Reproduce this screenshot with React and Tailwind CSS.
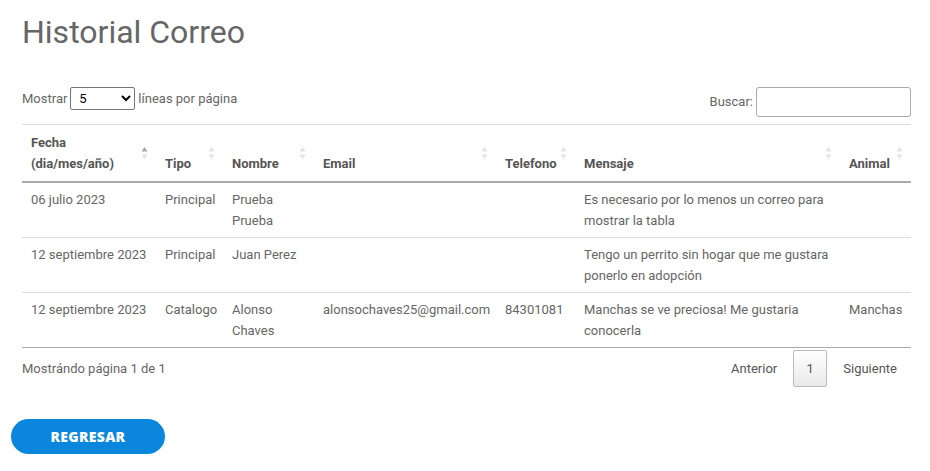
import { useState } from 'react';

const columns = [
  { label: 'Fecha', label2: '(dia/mes/año)', width: 'w-[134px]', active: true },
  { label: 'Tipo', width: 'w-[67px]' },
  { label: 'Nombre', width: 'w-[91px]' },
  { label: 'Email', width: 'w-[182px]' },
  { label: 'Telefono', width: 'w-[79px]' },
  { label: 'Mensaje', width: 'w-[265px]' },
  { label: 'Animal', width: 'w-[71px]' },
];

const rows = [
  {
    fecha: '06 julio 2023',
    tipo: 'Principal',
    nombre: 'Prueba Prueba',
    email: '',
    telefono: '',
    mensaje: 'Es necesario por lo menos un correo para mostrar la tabla',
    animal: '',
  },
  {
    fecha: '12 septiembre 2023',
    tipo: 'Principal',
    nombre: 'Juan Perez',
    email: '',
    telefono: '',
    mensaje: 'Tengo un perrito sin hogar que me gustara ponerlo en adopción',
    animal: '',
  },
  {
    fecha: '12 septiembre 2023',
    tipo: 'Catalogo',
    nombre: 'Alonso Chaves',
    email: 'alonsochaves25@gmail.com',
    telefono: '84301081',
    mensaje: 'Manchas se ve preciosa! Me gustaria conocerla',
    animal: 'Manchas',
  },
];

function SortIcon({ active }) {
  return (
    <svg width="7" height="13" viewBox="0 0 7 13" className="absolute right-[8px] top-1/2 -translate-y-1/2">
      <path d="M3.5 0.5 L6.5 5 L0.5 5 Z" fill={active ? '#a8a8a8' : '#e2e2e2'} />
      <path d="M3.5 12.5 L6.5 8 L0.5 8 Z" fill="#e2e2e2" />
    </svg>
  );
}

export default function App() {
  const [perPage, setPerPage] = useState('5');
  const [query, setQuery] = useState('');

  return (
    <div className="w-[930px] min-h-[471px] bg-white text-[#666] font-['Roboto',sans-serif] text-[13px]">
      <div className="pl-[22px] pr-[19px] pt-[13px]">
        {/* TITLE */}
        <h1 className="text-[32px] leading-[38px] font-normal text-[#666]">Historial Correo</h1>

        {/* CONTROLS */}
        <div className="mt-[36px] flex items-start justify-between">
          <div className="flex items-center h-[23px] gap-[3px]">
            <span>Mostrar</span>
            <select
              value={perPage}
              onChange={(e) => setPerPage(e.target.value)}
              className="w-[65px] h-[23px] border border-[#767676] rounded-[2px] bg-white text-[13px] text-black pl-[4px]"
            >
              <option value="5">5</option>
              <option value="10">10</option>
              <option value="25">25</option>
            </select>
            <span>líneas por página</span>
          </div>
          <div className="flex items-center h-[30px] gap-[3px]">
            <span>Buscar:</span>
            <input
              value={query}
              onChange={(e) => setQuery(e.target.value)}
              className="w-[155px] h-[30px] border border-[#aaa] rounded-[3px] bg-white px-[6px] outline-none"
            />
          </div>
        </div>

        {/* TABLE */}
        <table className="mt-[7px] w-[889px] table-fixed border-collapse border-t border-[#ddd]">
          <thead>
            <tr className="border-b-2 border-[#aaa]">
              {columns.map((col) => (
                <th
                  key={col.label}
                  className={`${col.width} relative text-left align-bottom font-bold text-[#555] leading-[21px] pl-[9px] pr-[14px] pt-[7px] pb-[7px]`}
                >
                  <div>{col.label}</div>
                  {col.label2 && <div>{col.label2}</div>}
                  <SortIcon active={col.active} />
                </th>
              ))}
            </tr>
          </thead>
          <tbody>
            {rows.map((r, i) => (
              <tr key={i} className={i === rows.length - 1 ? 'border-b border-[#aaa]' : 'border-b border-[#ddd]'}>
                {[r.fecha, r.tipo, r.nombre, r.email, r.telefono, r.mensaje, r.animal].map((v, j) => (
                  <td key={j} className="align-top leading-[21px] pl-[9px] pr-[8px] pt-[6px] pb-[6px]">
                    {v}
                  </td>
                ))}
              </tr>
            ))}
          </tbody>
        </table>

        {/* FOOTER */}
        <div className="mt-[2px] flex justify-between items-start">
          <div className="pt-[9px] leading-[20px]">Mostrándo página 1 de 1</div>
          <div className="flex items-center h-[37px] mr-[14px]">
            <span className="px-[16px] text-[#555]">Anterior</span>
            <span className="w-[34px] h-[37px] flex items-center justify-center border border-[#bbb] rounded-[2px] bg-gradient-to-b from-white to-[#e9e9e9] text-[#555]">
              1
            </span>
            <span className="pl-[16px] text-[#555]">Siguiente</span>
          </div>
        </div>
      </div>

      {/* BUTTON */}
      <div className="px-[11px] mt-[32px]">
        <button className="w-[154px] h-[35px] rounded-full bg-[#0a87dc] text-white text-[14px] font-extrabold tracking-[0.3px] font-['Open_Sans',sans-serif]">
          REGRESAR
        </button>
      </div>
    </div>
  );
}
